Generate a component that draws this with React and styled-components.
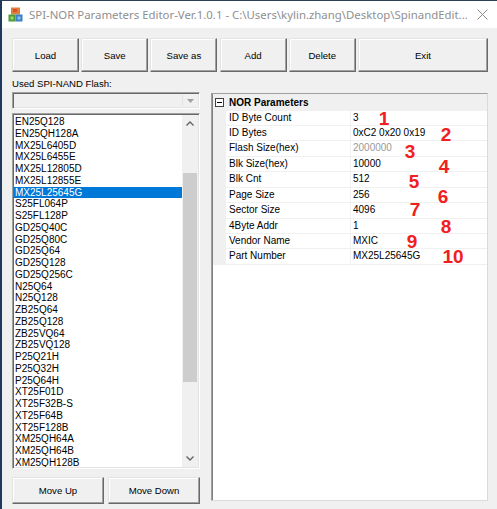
import React from 'react';
import styled, { createGlobalStyle } from 'styled-components';

const GlobalStyle = createGlobalStyle`
  html, body {
    margin: 0;
    padding: 0;
    background: #f0f0f0;
  }
  body {
    font-family: "Liberation Sans", Arial, sans-serif;
    color: #000;
  }
`;

const Window = styled.div`
  width: 497px;
  height: 509px;
  box-sizing: border-box;
  border-left: 2px solid #1d3a5e;
  border-top: 1px solid #2b3f57;
  background: #f0f0f0;
  display: flex;
  flex-direction: column;
  overflow: hidden;
`;

const TitleBar = styled.div`
  height: 27px;
  flex-shrink: 0;
  background: #fff;
  display: flex;
  align-items: center;
  padding-left: 6px;
`;

const TitleText = styled.span`
  flex: 1;
  margin-left: 6px;
  font-family: "Noto Sans", "Liberation Sans", sans-serif;
  font-size: 11.4px;
  color: #8f8f8f;
  white-space: nowrap;
  overflow: hidden;
`;

const CloseBox = styled.div`
  width: 30px;
  display: flex;
  justify-content: center;
  align-items: center;
`;

const Body = styled.div`
  flex: 1;
  display: flex;
  flex-direction: column;
  padding: 10px 9px 0 10px;
`;

const Toolbar = styled.div`
  display: grid;
  grid-template-columns: repeat(5, 67px) 1fr;
  column-gap: 2.2px;
  height: 34px;
`;

const Button = styled.button`
  box-sizing: border-box;
  height: ${(p) => p.h || 34}px;
  margin: 0;
  padding: 0;
  background: #f0f0f0;
  border: 1px solid;
  border-color: #e3e3e3 #696969 #696969 #e3e3e3;
  box-shadow: inset -1px -1px #a0a0a0, inset 1px 1px #ffffff;
  font-family: "Liberation Sans", Arial, sans-serif;
  font-size: 9.6px;
  color: #000;
`;

const Main = styled.div`
  display: flex;
  gap: 11px;
`;

const LeftCol = styled.div`
  width: 188px;
  display: flex;
  flex-direction: column;
`;

const Label = styled.div`
  margin-top: 5px;
  height: 14px;
  line-height: 14px;
  font-size: 9.6px;
  color: #000;
`;

const Combo = styled.div`
  margin-top: 1px;
  height: 17px;
  box-sizing: border-box;
  border: 1px solid;
  border-color: #a0a0a0 #fff #fff #a0a0a0;
  box-shadow: inset 1px 1px #696969, inset -1px -1px #e3e3e3;
  background: #f0f0f0;
  display: flex;
  justify-content: flex-end;
  padding: 2px;
`;

const ComboArrow = styled.div`
  width: 14px;
  display: flex;
  align-items: center;
  justify-content: center;
  border-left: 1px solid #e3e3e3;
`;

const ListBox = styled.div`
  margin-top: 4px;
  height: 356px;
  box-sizing: border-box;
  border: 1px solid;
  border-color: #a0a0a0 #fff #fff #a0a0a0;
  box-shadow: inset 1px 1px #696969, inset -1px -1px #e3e3e3;
  background: #fff;
  display: flex;
  padding: 1px;
  overflow: hidden;
`;

const Items = styled.div`
  flex: 1;
  padding-top: 1px;
  overflow: hidden;
`;

const Item = styled.div`
  height: 11.75px;
  line-height: 11.75px;
  font-size: 10px;
  padding-left: 1px;
  white-space: nowrap;
  background: ${(p) => (p.selected ? '#0078d7' : 'transparent')};
  color: ${(p) => (p.selected ? '#fff' : '#000')};
`;

const ScrollBar = styled.div`
  width: 16px;
  background: #f0f0f0;
  display: flex;
  flex-direction: column;
`;

const ScrollArrow = styled.div`
  height: 17px;
  display: flex;
  align-items: center;
  justify-content: center;
`;

const Track = styled.div`
  flex: 1;
  padding: 41px 1px 0 1px;
`;

const Thumb = styled.div`
  height: 209px;
  background: #cdcdcd;
`;

const MoveRow = styled.div`
  margin-top: 8px;
  display: grid;
  grid-template-columns: 1fr 1fr;
  column-gap: 4px;
`;

const GridBox = styled.div`
  flex: 1;
  margin-top: 21px;
  height: 408px;
  box-sizing: border-box;
  border-top: 1px solid #a0a0a0;
  border-left: 1px solid #a0a0a0;
  border-right: 1px solid #dadada;
  border-bottom: 1px solid #dadada;
  box-shadow: inset 1px 0 #808080;
  background: #fff;
  position: relative;
`;

const Category = styled.div`
  height: 16.5px;
  background: #f0f0f0;
  display: flex;
  align-items: center;
  margin-left: 1px;
`;

const ToggleCell = styled.div`
  width: 13px;
  display: flex;
  justify-content: center;
`;

const CategoryTitle = styled.span`
  margin-left: 3px;
  font-size: 10px;
  font-weight: bold;
`;

const Row = styled.div`
  display: grid;
  grid-template-columns: 13px 125px 1fr;
  height: 15.45px;
  box-sizing: border-box;
  border-bottom: 1px solid #f0f0f0;
  margin-left: 1px;
  font-size: 10px;
`;

const Margin = styled.div`
  background: #f0f0f0;
`;

const NameCell = styled.div`
  padding-left: 3px;
  line-height: 14.45px;
  border-right: 1px solid #f0f0f0;
  white-space: nowrap;
`;

const ValueCell = styled.div`
  position: relative;
  padding-left: 2px;
  line-height: 14.45px;
  white-space: nowrap;
  color: ${(p) => (p.readOnly ? '#999' : '#000')};
`;

const Mark = styled.span`
  position: absolute;
  transform: translate(-50%, -50%);
  font-family: "Liberation Sans", Arial, sans-serif;
  font-weight: bold;
  font-size: 19px;
  line-height: 1;
  color: #f02020;
`;

const flashes = [
  'EN25Q128', 'EN25QH128A', 'MX25L6405D', 'MX25L6455E', 'MX25L12805D',
  'MX25L12855E', 'MX25L25645G', 'S25FL064P', 'S25FL128P', 'GD25Q40C',
  'GD25Q80C', 'GD25Q64', 'GD25Q128', 'GD25Q256C', 'N25Q64', 'N25Q128',
  'ZB25Q64', 'ZB25Q128', 'ZB25VQ64', 'ZB25VQ128', 'P25Q21H', 'P25Q32H',
  'P25Q64H', 'XT25F01D', 'XT25F32B-S', 'XT25F64B', 'XT25F128B',
  'XM25QH64A', 'XM25QH64B', 'XM25QH128B',
];

// mark: [x from value cell left, y from row middle]
const params = [
  { name: 'ID Byte Count', value: '3', mark: [33, 0] },
  { name: 'ID Bytes', value: '0xC2 0x20 0x19', mark: [95, 0.5] },
  { name: 'Flash Size(hex)', value: '2000000', readOnly: true, mark: [59, 2] },
  { name: 'Blk Size(hex)', value: '10000', mark: [93, 1.5] },
  { name: 'Blk Cnt', value: '512', mark: [63, 2] },
  { name: 'Page Size', value: '256', mark: [92, 0.6] },
  { name: 'Sector Size', value: '4096', mark: [64, -1] },
  { name: '4Byte Addr', value: '1', mark: [95, 0.7] },
  { name: 'Vendor Name', value: 'MXIC', mark: [61, 0] },
  { name: 'Part Number', value: 'MX25L25645G', mark: [102, -1] },
];

const AppIcon = () => (
  <svg width="15" height="15" viewBox="0 0 15 15">
    <rect x="3" y="0.5" width="9" height="7" fill="#d9823b" />
    <rect x="5" y="2" width="4" height="3" fill="#e24b2b" />
    <rect x="0.5" y="7.5" width="7" height="7" fill="#4e9a3a" />
    <rect x="7.5" y="7.5" width="7" height="7" fill="#3a7fc9" />
    <rect x="2.5" y="9.5" width="3" height="3" fill="#a6d66b" />
    <rect x="9.5" y="9.5" width="3" height="3" fill="#8cc3f0" />
  </svg>
);

const CloseIcon = () => (
  <svg width="11" height="11" viewBox="0 0 11 11">
    <path d="M0.5 0.5 L10.5 10.5 M10.5 0.5 L0.5 10.5" stroke="#8a8a8a" strokeWidth="1" fill="none" />
  </svg>
);

const Chevron = ({ down }) => (
  <svg width="8" height="5" viewBox="0 0 8 5">
    <path
      d={down ? 'M0.5 0.5 L4 4 L7.5 0.5' : 'M0.5 4.5 L4 1 L7.5 4.5'}
      stroke="#606060"
      strokeWidth="1.3"
      fill="none"
    />
  </svg>
);

const DropTriangle = () => (
  <svg width="7" height="4" viewBox="0 0 7 4">
    <path d="M0 0 L7 0 L3.5 4 Z" fill="#a0a0a0" />
  </svg>
);

const MinusBox = () => (
  <svg width="9" height="9" viewBox="0 0 9 9">
    <rect x="0.5" y="0.5" width="8" height="8" fill="#fff" stroke="#404040" />
    <path d="M2 4.5 H7" stroke="#000" strokeWidth="1" />
  </svg>
);

const App = () => {
  return (
    <>
      <GlobalStyle />
      <Window>
        <TitleBar>
          <AppIcon />
          <TitleText>SPI-NOR Parameters Editor-Ver.1.0.1 - C:\Users\kylin.zhang\Desktop\SpinandEdit...</TitleText>
          <CloseBox>
            <CloseIcon />
          </CloseBox>
        </TitleBar>
        <Body>
          <Toolbar>
            <Button>Load</Button>
            <Button>Save</Button>
            <Button>Save as</Button>
            <Button>Add</Button>
            <Button>Delete</Button>
            <Button>Exit</Button>
          </Toolbar>
          <Main>
            <LeftCol>
              <Label>Used SPI-NAND Flash:</Label>
              <Combo>
                <ComboArrow>
                  <DropTriangle />
                </ComboArrow>
              </Combo>
              <ListBox>
                <Items>
                  {flashes.map((f, i) => (
                    <Item key={f} selected={i === 6}>{f}</Item>
                  ))}
                </Items>
                <ScrollBar>
                  <ScrollArrow><Chevron /></ScrollArrow>
                  <Track><Thumb /></Track>
                  <ScrollArrow><Chevron down /></ScrollArrow>
                </ScrollBar>
              </ListBox>
              <MoveRow>
                <Button h={27}>Move Up</Button>
                <Button h={27}>Move Down</Button>
              </MoveRow>
            </LeftCol>
            <GridBox>
              <Category>
                <ToggleCell><MinusBox /></ToggleCell>
                <CategoryTitle>NOR Parameters</CategoryTitle>
              </Category>
              {params.map((p, i) => (
                <Row key={p.name}>
                  <Margin />
                  <NameCell>{p.name}</NameCell>
                  <ValueCell readOnly={p.readOnly}>
                    {p.value}
                    <Mark style={{ left: p.mark[0], top: `calc(50% + ${p.mark[1]}px)` }}>{i + 1}</Mark>
                  </ValueCell>
                </Row>
              ))}
            </GridBox>
          </Main>
        </Body>
      </Window>
    </>
  );
};

export default App;
